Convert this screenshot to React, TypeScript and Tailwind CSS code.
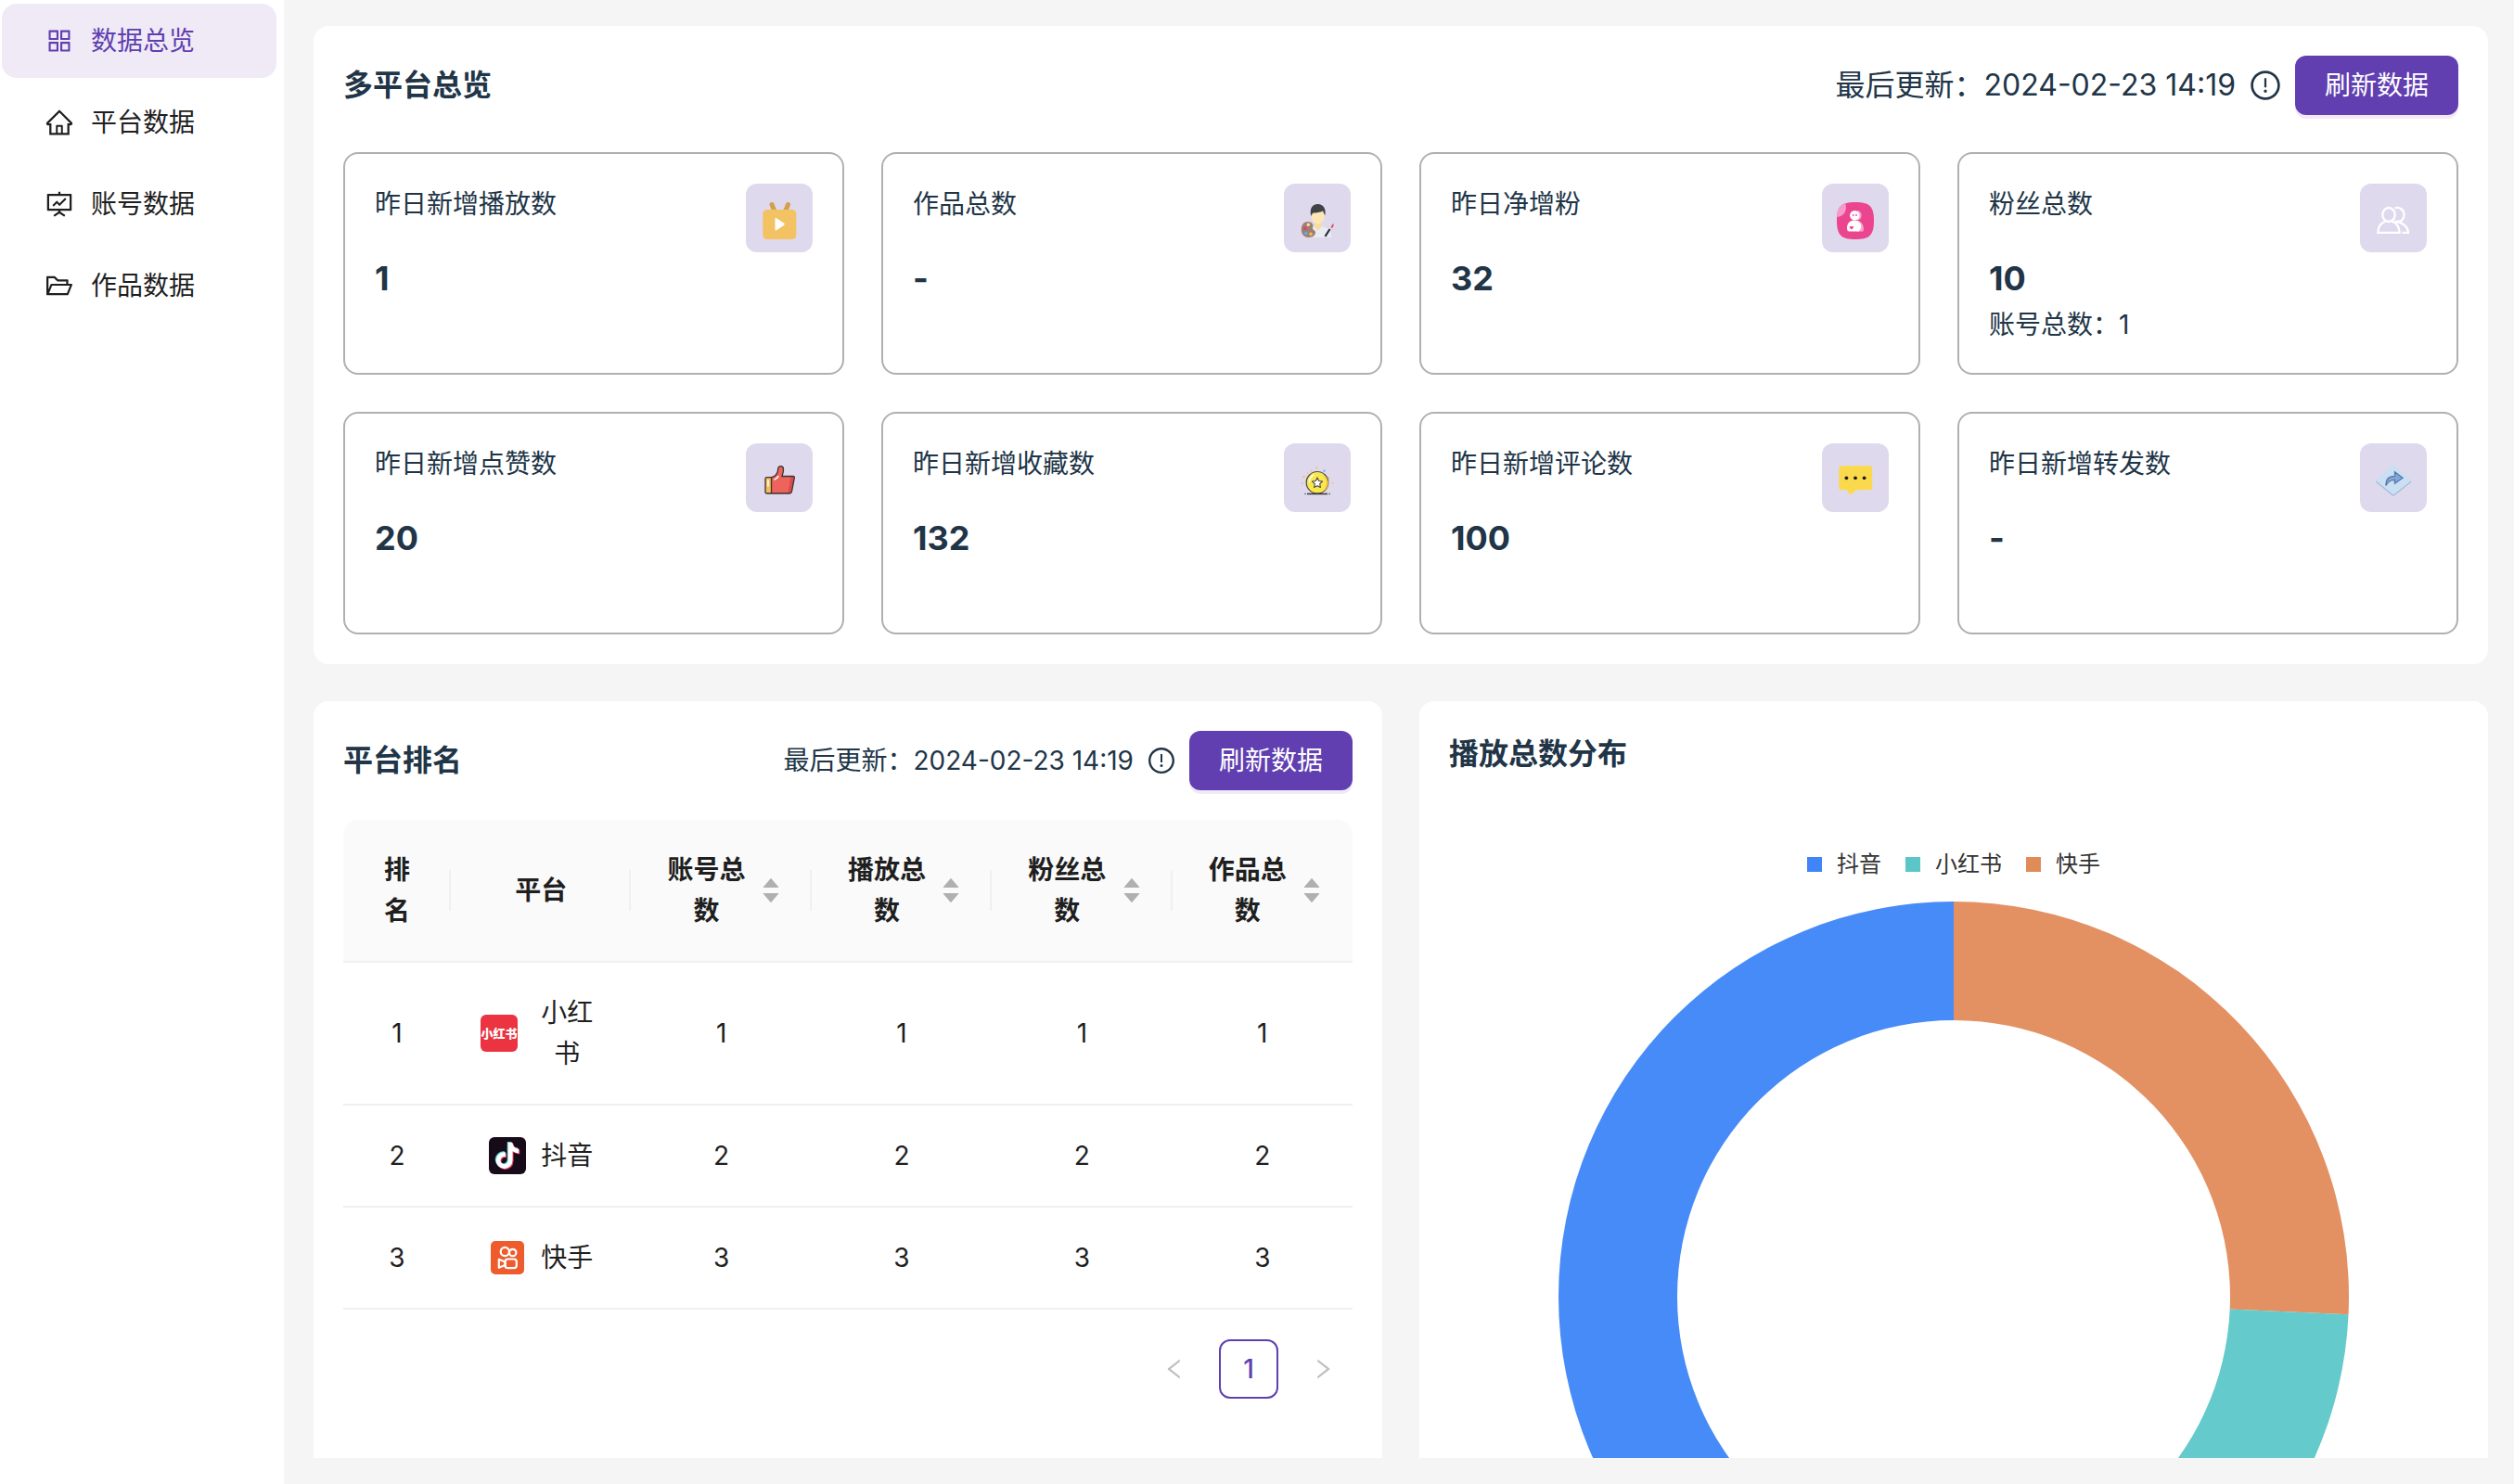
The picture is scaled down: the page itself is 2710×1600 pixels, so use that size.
import type { ReactNode } from 'react';
import {
  AiFillCaretDown,
  AiFillCaretUp,
  AiOutlineAppstore,
  AiOutlineExclamationCircle,
  AiOutlineFolderOpen,
  AiOutlineFundProjectionScreen,
  AiOutlineHome,
  AiOutlineLeft,
  AiOutlineRight,
} from 'react-icons/ai';
import { FaTiktok } from 'react-icons/fa6';

const UPDATED_AT = '2024-02-23 14:19';

/* ---------- metric icons ---------- */

function PlayIcon() {
  return (
    <svg viewBox="0 0 40 40" className="size-10" aria-hidden="true">
      <path d="M12 2.5 15 10M29.500 2.500 26.500 10" stroke="#d3a04a" strokeWidth="5" strokeLinecap="round" />
      <rect x="2.300" y="8" width="36" height="32" rx="4.500" fill="#f3c262" />
      <path d="M15.500 18v11.500q0 1.500 1.500.7l8-5.200q1.400-1.200 0-2.400l-8-5.400q-1.500-.8-1.500.8z" fill="#fff" />
    </svg>
  );
}

function ArtistIcon() {
  return (
    <svg viewBox="0 0 40 40" className="size-10" aria-hidden="true">
      <path d="M16 26.500c2-1.500 8-1.500 10 0l6 2.500c2 1 3 4 3 9H16z" fill="#e8edf3" />
      <path d="M17 20h7.500v6.500l-3.700 4-3.800-4z" fill="#f8dc9c" />
      <path d="M13.500 9c0-3 14.500-3 14.500 0v5.500c0 5-4 9-7.200 9s-7.300-4-7.300-9z" fill="#fbe6b4" />
      <path d="M13.200 15C11.500 7 14.500 2 20.500 2s9.300 5 7.800 12.500c-.8-1.500-1.500-3.500-2.300-5-3 1.500-7 2-10.500 2-.8 1-1.500 2-2.300 3.500z" fill="#3f4247" />
      <path d="M9.500 21c5 0 7 3.500 5.500 6-1.500 3 4 3 3 6.500-.8 3-4 4.500-7.500 4.500-5 0-7.700-4-7.700-8.500 0-5 2.700-8.500 6.700-8.500z" fill="#a07f72" />
      <circle cx="10.300" cy="24.300" r="1.700" fill="#f7dfa4" />
      <circle cx="6.800" cy="28.300" r="1.900" fill="#d6457c" />
      <circle cx="7.800" cy="33.500" r="1.800" fill="#4db8e8" />
      <circle cx="13" cy="34.300" r="1.800" fill="#f4bf45" />
      <path d="m28.500 36.800 5-7.800" stroke="#2e3238" strokeWidth="2.200" />
      <path d="M34.500 27.500c.3-2 1.500-3.500 3-4.500.3 2 0 3.500-1.200 4.800z" fill="#e2525a" />
    </svg>
  );
}

function NewFansIcon() {
  return (
    <svg viewBox="0 0 40 40" className="size-10" aria-hidden="true">
      <path d="M20 0c15 0 20 4 20 20s-5 20-20 20S0 36 0 20 5 0 20 0z" fill="#ec4590" />
      <path d="M9.300 1.500C11.500 8.500 8 15.500.1 16 .4 8 3 3.200 9.300 1.500z" fill="#f79cc8" />
      <path d="M22 9a5.300 5.300 0 0 1 0 10.500l4 2c2.500 2.500 3.500 6 2.500 10H22z" fill="#f9a9cd" />
      <circle cx="19.300" cy="14.200" r="5.200" fill="#fff" />
      <path d="M19 19.500c5 0 8 4 7 8l-2 4H13.500c-2 0-2.500-1.500-2.500-4 0-5 3.500-8 8-8z" fill="#fff" />
      <circle cx="17.700" cy="14" r=".9" fill="#ec4590" />
      <circle cx="21" cy="14" r=".9" fill="#ec4590" />
      <path d="M13.800 26h1.600l.5.500.5-.5h1.500v1.500l-2 2-2.100-2z" fill="#ec4590" />
    </svg>
  );
}

function FansIcon() {
  return (
    <svg viewBox="0 0 40 40" className="size-10" aria-hidden="true">
      <g fill="none" stroke="#fff" strokeWidth="2.300">
        <ellipse cx="15" cy="13.500" rx="6.700" ry="7.500" />
        <path d="M11.500 20.500C6.500 22.500 3.500 27 3.300 32.800h23.300c-.2-5.800-3.200-10.300-8.200-12.300" />
        <path d="M21.500 6.500c5-2 10 1.500 10 7 0 4-2.500 7.300-6.500 7.300h-3.500c8 .5 14 5 14.500 12h-6.500" />
      </g>
    </svg>
  );
}

function LikeIcon() {
  return (
    <svg viewBox="0 0 40 40" className="size-10" aria-hidden="true">
      <path d="M11.500 16.700c4.500-1 7-4 7.200-9.500.2-3.500 5.800-3.500 5.800.8 0 3-.7 5-1.500 7.500h12c1 0 1.500.7 1.300 1.800L33.500 32c-.3 1.500-1 2-2.500 2H11.500z" fill="#ee635c" />
      <path d="m32.500 16-3.200 18H31c1.500 0 2.200-.5 2.500-2l2.800-14.700c.2-1.100-.3-1.300-1.300-1.300z" fill="#d94c49" />
      <path d="M5 18.500c0-1.300.7-1.800 2-1.800h4.500V34H7c-1.300 0-2-.5-2-1.800z" fill="#f4bd56" />
      <path d="M11.500 16.700c4.500-1 7-4 7.200-9.500.2-3.500 5.800-3.500 5.800.8 0 3-.7 5-1.500 7.500h12c1 0 1.500.7 1.300 1.800L33.500 32c-.3 1.500-1 2-2.500 2H7c-1.300 0-2-.5-2-1.800V18.500c0-1.300.7-1.800 2-1.800h4.500V34" fill="none" stroke="#3b3432" strokeWidth="1.300" />
      <path d="M8 20v6M15 19c1.500-.5 3-2 4-3.500" stroke="#fff" strokeWidth="1.500" strokeLinecap="round" fill="none" />
    </svg>
  );
}

function CollectIcon() {
  return (
    <svg viewBox="0 0 40 40" className="size-10" aria-hidden="true">
      <circle cx="20" cy="22.300" r="11.800" fill="#f8e84e" stroke="#4a4648" strokeWidth="1.200" />
      <path d="M26 13.500c6 5 5.500 15-2 19.300 9-2 11.500-14 2-19.300z" fill="#e9b93d" />
      <path d="M11.500 21c.3-3 2-5.500 4.500-6.800" stroke="#fff" strokeWidth="1.500" strokeLinecap="round" fill="none" />
      <path d="m20 17 1.700 3.500 3.800.5-2.800 2.700.7 3.800-3.400-1.800-3.400 1.800.7-3.800-2.800-2.700 3.800-.5z" fill="#fff" stroke="#4a4648" strokeWidth="1.100" strokeLinejoin="round" />
      <path d="M6.500 34.500h1M9 34.500h22M32.500 34.500h1.200" stroke="#3b3638" strokeWidth="1.300" />
      <g fill="#f0bd5a">
        <rect x="4.500" y="15" width="2" height="2" />
        <rect x="3" y="22.500" width="1.500" height="1.500" />
        <rect x="13" y="9" width="1.500" height="1.500" />
        <rect x="18.500" y="5.500" width="1.800" height="1.800" />
        <rect x="32" y="16.500" width="1.500" height="1.500" />
        <rect x="36" y="22" width="1.500" height="1.500" />
        <rect x="9" y="11.500" width="1.200" height="1.200" />
      </g>
      <rect x="26.500" y="8.500" width="2" height="2.500" fill="#83aef0" />
    </svg>
  );
}

function CommentIcon() {
  return (
    <svg viewBox="0 0 40 40" className="size-10" aria-hidden="true">
      <path d="M5 4.300h30.500c1.700 0 2.700 1 2.700 2.700v20.500c0 1.700-1 2.700-2.700 2.700h-15L17 34.300c-1.200 1.200-2.200 1.200-3.400 0l-3-4.100H5c-1.700 0-2.700-1-2.700-2.700V7c0-1.700 1-2.700 2.700-2.700z" fill="#fada4c" />
      <circle cx="10.400" cy="17.300" r="1.900" fill="#1d1a12" />
      <circle cx="20" cy="17.300" r="1.900" fill="#1d1a12" />
      <circle cx="29.600" cy="17.300" r="1.900" fill="#1d1a12" />
    </svg>
  );
}

function ShareIcon() {
  return (
    <svg viewBox="0 0 40 40" className="size-10" aria-hidden="true">
      <path d="M1 20.500 20 5l19.300 15.500v1.200L21.500 36q-1.500 1.200-3 0L1 21.700z" fill="#a3b8dc" />
      <path d="M18.700 3.700q1.300-1 2.600 0l18 16.500L21.500 34.500q-1.500 1.200-3 0L1 20.200z" fill="#cbdff3" />
      <path d="M12 25.500c-.5-6.500 2.500-10 9.500-10.200v-4.500l8.500 6.500-8.500 6v-4c-5 0-7.500 1.700-9.500 6.200z" fill="#84a7d6" stroke="#5578ae" strokeWidth="1.300" />
    </svg>
  );
}

/* ---------- platform logos ---------- */

function XiaohongshuLogo() {
  return (
    <span
      aria-hidden="true"
      className="flex size-10 shrink-0 items-center justify-center rounded-md bg-[#eb3341] text-[13px] leading-none font-black whitespace-nowrap text-white"
    >
      小红书
    </span>
  );
}

function DouyinLogo() {
  return (
    <span aria-hidden="true" className="grid size-10 shrink-0 place-items-center rounded-md bg-[#170b1a]">
      <FaTiktok className="col-start-1 row-start-1 mr-0.5 mb-0.5 size-7 text-[#5fd8d6]" />
      <FaTiktok className="col-start-1 row-start-1 mt-0.5 ml-0.5 size-7 text-[#e8415f]" />
      <FaTiktok className="col-start-1 row-start-1 size-7 text-white" />
    </span>
  );
}

function KuaishouLogo() {
  return (
    <svg viewBox="0 0 40 40" className="size-10 shrink-0" aria-hidden="true">
      <rect x="2" y="2" width="36" height="36" rx="5" fill="#ee5b2d" />
      <g fill="none" stroke="#fff" strokeWidth="2.200">
        <circle cx="17.300" cy="13.500" r="4.600" />
        <circle cx="25.700" cy="14.500" r="3.700" />
        <rect x="17.500" y="21.500" width="12.300" height="9.700" rx="3" />
        <path d="M17.500 24.500 10.800 21.800v9l6.700-2.700z" strokeLinejoin="round" />
      </g>
    </svg>
  );
}

/* ---------- data ---------- */

const navItems = [
  { label: '数据总览', Icon: AiOutlineAppstore, active: true },
  { label: '平台数据', Icon: AiOutlineHome, active: false },
  { label: '账号数据', Icon: AiOutlineFundProjectionScreen, active: false },
  { label: '作品数据', Icon: AiOutlineFolderOpen, active: false },
];

const metrics: { label: string; value: string; note?: string; icon: ReactNode }[] = [
  { label: '昨日新增播放数', value: '1', icon: <PlayIcon /> },
  { label: '作品总数', value: '-', icon: <ArtistIcon /> },
  { label: '昨日净增粉', value: '32', icon: <NewFansIcon /> },
  { label: '粉丝总数', value: '10', note: '账号总数：1', icon: <FansIcon /> },
  { label: '昨日新增点赞数', value: '20', icon: <LikeIcon /> },
  { label: '昨日新增收藏数', value: '132', icon: <CollectIcon /> },
  { label: '昨日新增评论数', value: '100', icon: <CommentIcon /> },
  { label: '昨日新增转发数', value: '-', icon: <ShareIcon /> },
];

const sortableColumns = ['账号总数', '播放总数', '粉丝总数', '作品总数'];

const rows = [
  { rank: 1, name: '小红书', logo: <XiaohongshuLogo />, values: [1, 1, 1, 1] },
  { rank: 2, name: '抖音', logo: <DouyinLogo />, values: [2, 2, 2, 2] },
  { rank: 3, name: '快手', logo: <KuaishouLogo />, values: [3, 3, 3, 3] },
];

const slices = [
  { name: '快手', from: 0, to: 92.6, color: '#e39162' },
  { name: '小红书', from: 92.6, to: 180, color: '#64cacb' },
  { name: '抖音', from: 180, to: 360, color: '#468bf8' },
];

/* ---------- building blocks ---------- */

function RefreshButton() {
  return (
    <button
      type="button"
      className="h-16 rounded-xl bg-[#613fb1] px-8 text-[28px] leading-11 text-white shadow-[0_4px_0_#f0eaf7]"
    >
      刷新数据
    </button>
  );
}

function Sidebar() {
  return (
    <nav className="w-[306px] shrink-0 bg-white py-1 pr-2 pl-0.5">
      <ul className="flex flex-col gap-2">
        {navItems.map(({ label, Icon, active }) => (
          <li key={label}>
            <a
              href="#"
              aria-current={active ? 'page' : undefined}
              className={
                active
                  ? 'flex h-20 items-center gap-[18px] rounded-2xl bg-[#efeaf6] px-[46px] text-[#613fb1]'
                  : 'flex h-20 items-center gap-[18px] rounded-2xl px-[46px] text-[#1f1f1f]'
              }
            >
              <Icon className="size-8" aria-hidden="true" />
              <span>{label}</span>
            </a>
          </li>
        ))}
      </ul>
    </nav>
  );
}

function MetricCard({ label, value, note, icon }: { label: string; value: string; note?: string; icon: ReactNode }) {
  return (
    <article className="min-h-60 rounded-2xl border-2 border-[#b0b0b0] px-8 pt-8 pb-7">
      <div className="flex items-start justify-between">
        <h3>{label}</h3>
        <div className="rounded-xl bg-[#dfd9ee] px-4 pt-5 pb-3.5">{icon}</div>
      </div>
      <p className="text-[36px] leading-14 font-bold">{value}</p>
      {note && <p>{note}</p>}
    </article>
  );
}

function Overview() {
  return (
    <section className="rounded-2xl bg-white p-8">
      <header className="mb-10 flex items-center justify-between">
        <h2 className="text-[32px] leading-[50px] font-semibold">多平台总览</h2>
        <div className="flex items-center gap-3.5 text-[32px]">
          <span>最后更新：{UPDATED_AT}</span>
          <AiOutlineExclamationCircle className="size-9" aria-hidden="true" />
          <RefreshButton />
        </div>
      </header>
      <div className="grid grid-cols-4 gap-10">
        {metrics.map((m) => (
          <MetricCard key={m.label} {...m} />
        ))}
      </div>
    </section>
  );
}

function HeaderDivider() {
  return <span className="absolute top-1/2 right-0 h-11 w-0.5 -translate-y-1/2 bg-[#f0f0f0]" />;
}

function RankingTable() {
  return (
    <table className="w-full table-fixed border-separate border-spacing-0 text-center text-[#1f1f1f]">
      <thead>
        <tr>
          <th className="relative w-[116px] rounded-tl-2xl border-b-2 border-[#f0f0f0] bg-[#fafafa] p-8 font-semibold">
            排名
            <HeaderDivider />
          </th>
          <th className="relative border-b-2 border-[#f0f0f0] bg-[#fafafa] p-8 font-semibold">
            平台
            <HeaderDivider />
          </th>
          {sortableColumns.map((title, i) => (
            <th
              key={title}
              className="relative border-b-2 border-[#f0f0f0] bg-[#fafafa] p-8 font-semibold last:rounded-tr-2xl"
            >
              <div className="flex items-center gap-2">
                <span className="flex-1">{title}</span>
                <button type="button" aria-label={`${title}排序`} className="flex w-6 flex-col items-center text-[#b0b0b0]">
                  <AiFillCaretUp className="-mb-2 size-6" />
                  <AiFillCaretDown className="size-6" />
                </button>
              </div>
              {i < sortableColumns.length - 1 && <HeaderDivider />}
            </th>
          ))}
        </tr>
      </thead>
      <tbody>
        {rows.map((row) => (
          <tr key={row.name}>
            <td className="border-b-2 border-[#f0f0f0] p-8">{row.rank}</td>
            <td className="border-b-2 border-[#f0f0f0] p-8">
              <div className="flex items-center justify-center gap-4">
                {row.logo}
                <span>{row.name}</span>
              </div>
            </td>
            {row.values.map((v, i) => (
              <td key={i} className="border-b-2 border-[#f0f0f0] p-8">
                {v}
              </td>
            ))}
          </tr>
        ))}
      </tbody>
    </table>
  );
}

function Ranking() {
  return (
    <section className="rounded-2xl bg-white p-8">
      <header className="mb-8 flex items-center justify-between">
        <h2 className="text-[32px] leading-[50px] font-semibold">平台排名</h2>
        <div className="flex items-center gap-3.5">
          <span>最后更新：{UPDATED_AT}</span>
          <AiOutlineExclamationCircle className="size-8" aria-hidden="true" />
          <RefreshButton />
        </div>
      </header>
      <RankingTable />
      <nav aria-label="分页" className="mt-8 flex justify-end gap-4">
        <button type="button" disabled aria-label="上一页" className="flex size-16 items-center justify-center text-[#bfbfbf]">
          <AiOutlineLeft className="size-7" />
        </button>
        <button
          type="button"
          aria-current="page"
          className="size-16 rounded-xl border-2 border-[#613fb1] bg-white font-medium text-[#613fb1]"
        >
          1
        </button>
        <button type="button" disabled aria-label="下一页" className="flex size-16 items-center justify-center text-[#bfbfbf]">
          <AiOutlineRight className="size-7" />
        </button>
      </nav>
    </section>
  );
}

const OUTER = 426;
const INNER = 298;

function point(radius: number, degrees: number) {
  const a = (degrees * Math.PI) / 180;
  return `${OUTER + radius * Math.sin(a)} ${OUTER - radius * Math.cos(a)}`;
}

function ringSlice(from: number, to: number) {
  const large = to - from > 180 ? 1 : 0;
  return `M${point(OUTER, from)}A${OUTER} ${OUTER} 0 ${large} 1 ${point(OUTER, to)}L${point(INNER, to)}A${INNER} ${INNER} 0 ${large} 0 ${point(INNER, from)}Z`;
}

function Distribution() {
  return (
    <section className="rounded-2xl bg-white p-8">
      <h2 className="text-[32px] leading-[50px] font-semibold">播放总数分布</h2>
      <ul className="mt-[76px] flex justify-center gap-[26px] text-2xl leading-9 text-[#333333]">
        <li className="flex items-center gap-4">
          <span className="size-4 bg-[#3f84f8]" />
          抖音
        </li>
        <li className="flex items-center gap-4">
          <span className="size-4 bg-[#5bc6c8]" />
          小红书
        </li>
        <li className="flex items-center gap-4">
          <span className="size-4 bg-[#e08c59]" />
          快手
        </li>
      </ul>
      <svg viewBox="0 0 852 852" role="img" aria-label="播放总数分布" className="mx-auto mt-[22px] w-full max-w-[852px]">
        {slices.map((s) => (
          <path key={s.name} d={ringSlice(s.from, s.to)} fill={s.color} />
        ))}
      </svg>
    </section>
  );
}

export default function App() {
  return (
    <div className="flex h-screen bg-[#f5f5f5] font-['Inter','Noto_Sans_CJK_SC',sans-serif] text-[28px] leading-11 text-[#213547]">
      <Sidebar />
      <main className="min-w-0 flex-1 py-7 pr-7 pl-8">
        <div className="flex h-full flex-col gap-10 overflow-y-auto rounded-t-2xl [scrollbar-width:none]">
          <Overview />
          <div className="grid grid-cols-2 gap-10">
            <Ranking />
            <Distribution />
          </div>
        </div>
      </main>
    </div>
  );
}
